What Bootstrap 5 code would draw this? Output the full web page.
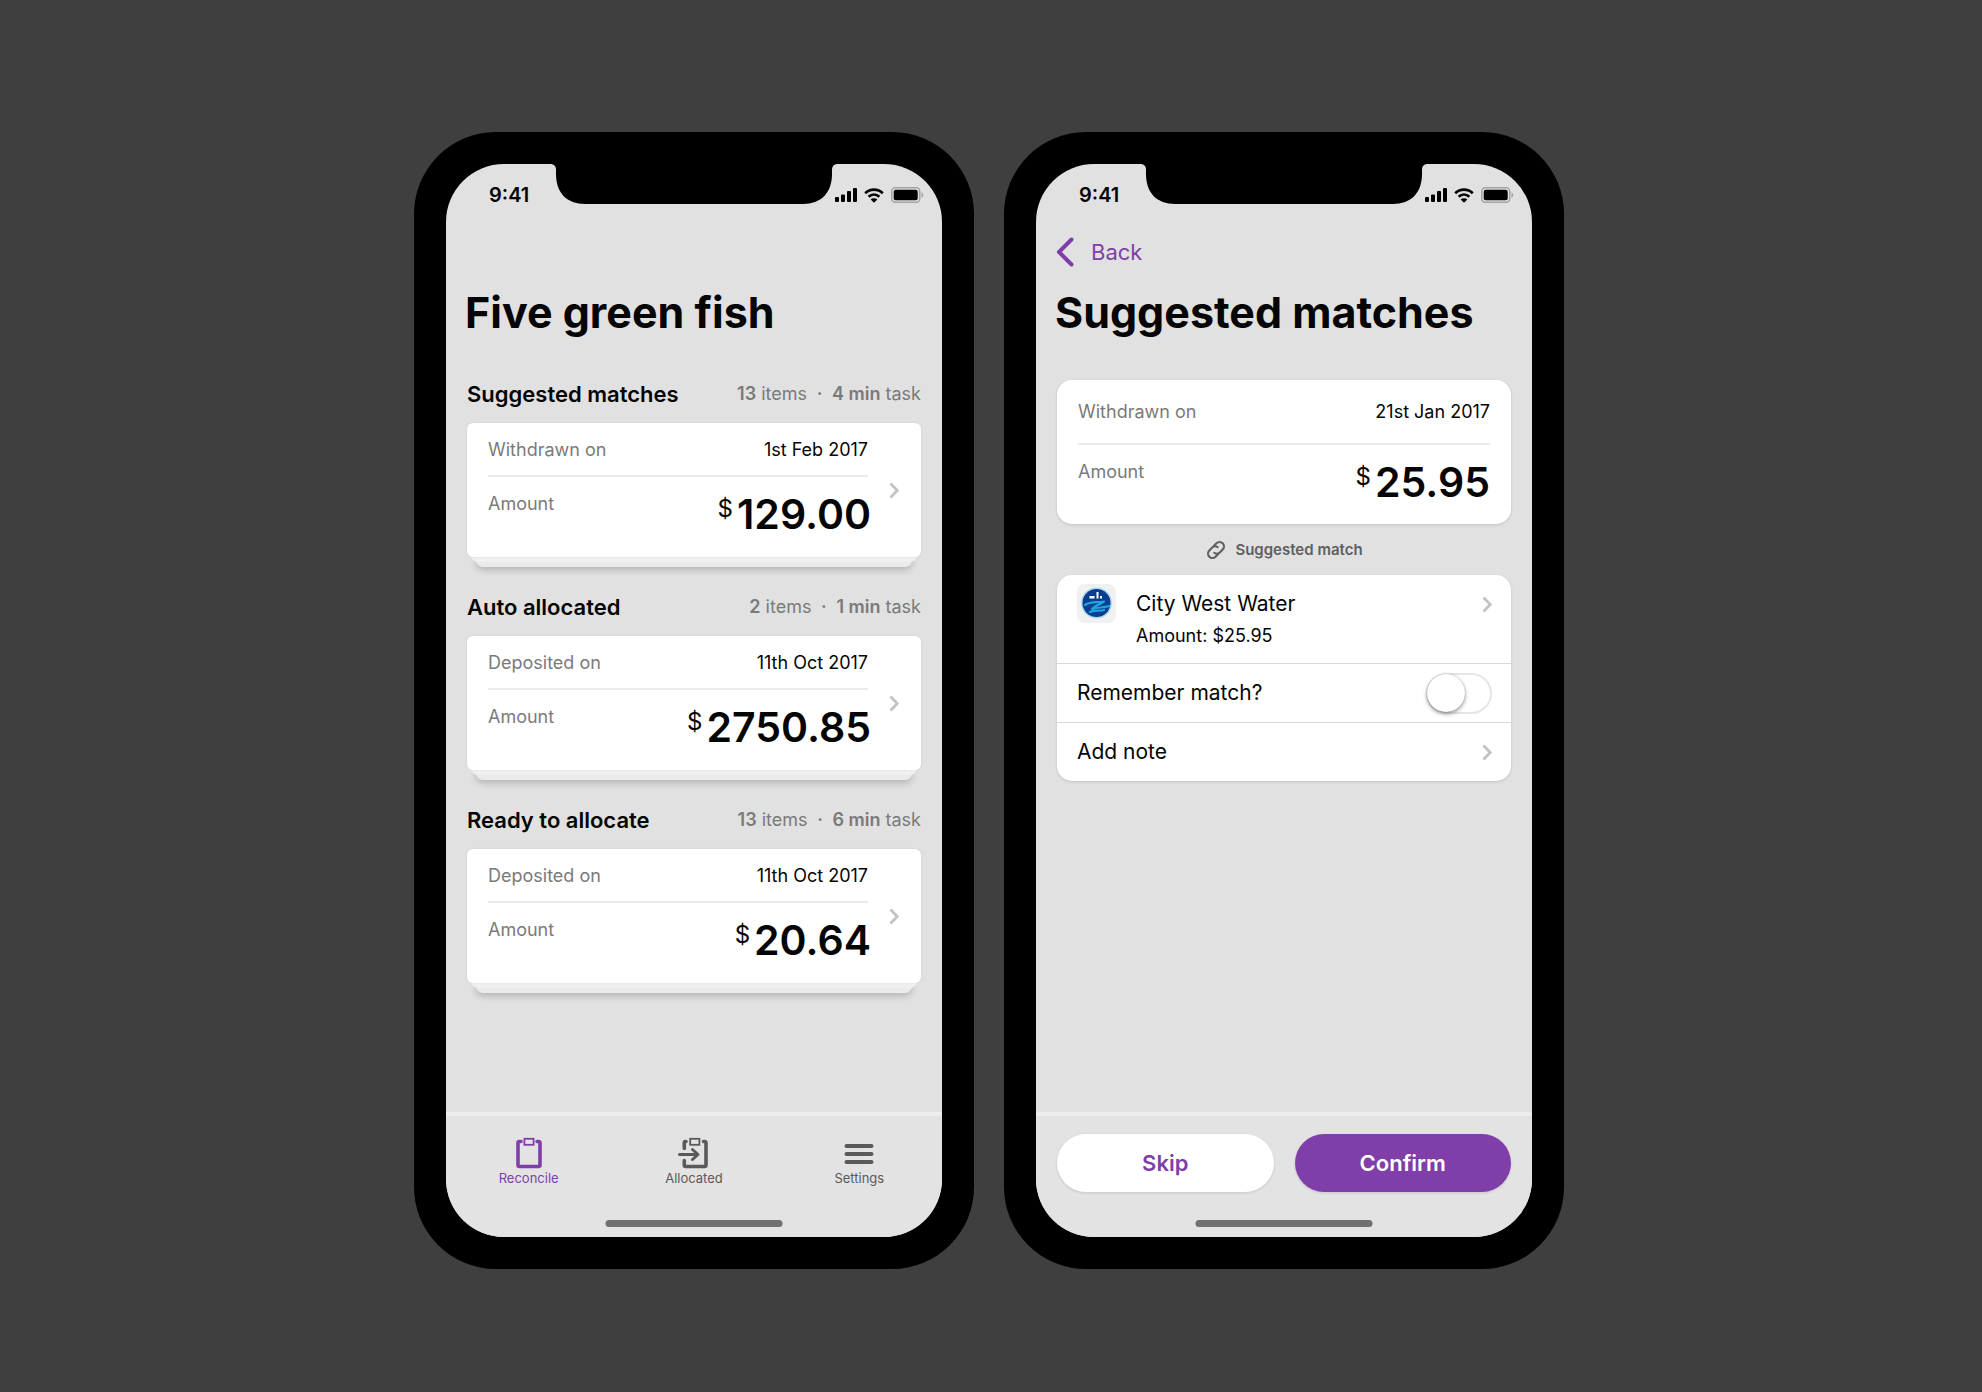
<!DOCTYPE html>
<html lang="en">
<head>
<meta charset="utf-8">
<meta name="viewport" content="width=device-width, initial-scale=1">
<title>Five green fish</title>
<link href="https://cdn.jsdelivr.net/npm/bootstrap@5.3.0/dist/css/bootstrap.min.css" rel="stylesheet">
<style>
  :root { --brand: #803fa8; --screen: #e1e1e1; --ink: #050505; --soft: #7a7a7a; --rule: #ebebeb; }
  body { background: #3f3f3f; color: var(--ink); font-family: Inter, "Liberation Sans", sans-serif; font-size: 18px; line-height: 24px; }
  a { color: inherit; text-decoration: none; }
  svg { display: block; flex: none; }
  .stage { gap: 30px; padding: 132px 4px 0 0; }
  .phone { flex: 1 1 0; min-width: 400px; max-width: 560px; padding: 32px; background: #000; border-radius: 82px; }
  .screen { min-height: 1073px; background: var(--screen); border-radius: 58px; overflow: hidden; }
  .notch { top: 0; left: 50%; transform: translateX(-50%); }
  .statusbar { height: 62px; padding: 0 18px 0 43px; font-size: 20px; }
  .statusbar-icons { gap: 7px; }
  .navrow { height: 52px; padding: 0 20px; font-size: 22px; color: var(--brand); }
  .page-title { font-size: 43px; line-height: 56px; font-weight: 700; padding: 6px 19px 0; margin: 0 0 40px; }
  .section-block { padding: 0 21px; margin-bottom: 26px; }
  .section-head { height: 43px; padding-bottom: 16px; }
  .section-head h2 { font-size: 22px; line-height: 28px; font-weight: 600; margin: 0; }
  .meta { color: var(--soft); }
  .meta b { font-weight: 600; }
  .tile { border: 0; background: #fff; color: var(--ink); box-shadow: 0 1px 3px rgba(0,0,0,.14); }
  .stacked { isolation: isolate; margin-bottom: 10px; }
  .stacked .tile { border-radius: 6px; min-height: 134px; padding: 0 22px 0 21px; gap: 21px; box-shadow: 0 0 3px rgba(0,0,0,.08); }
  .stacked::before, .stacked::after { content: ""; position: absolute; z-index: -1; height: 12px; border-radius: 0 0 7px 7px; }
  .stacked::before { left: 4px; right: 4px; bottom: -5px; background: #f0f0f0; }
  .stacked::after { left: 9px; right: 9px; bottom: -10px; background: #ebebeb; z-index: -2; box-shadow: 0 3px 7px rgba(0,0,0,.2); }
  .stacked .money { margin-right: -3px; }
  .fact { height: 54px; padding-top: 1px; border-bottom: 2px solid var(--rule); }
  .fact-label { color: var(--soft); }
  .total { height: 80px; padding-top: 15px; }
  .money { font-size: 41px; line-height: 48px; font-weight: 600; gap: 4px; margin-top: -2px; }
  .money small { font-size: 24px; line-height: 38px; font-weight: 400; }
  .wide-tile { border-radius: 15px; margin: 0 21px; }
  .detail { padding: 0 21px; }
  .detail .fact { height: 65px; }
  .detail .total { height: 79px; }
  .match-label { height: 51px; gap: 8px; font-size: 15px; font-weight: 600; color: #5f5f5f; }
  .options { overflow: hidden; }
  .option { height: 59px; padding: 0 19px 0 20px; font-size: 21px; border-top: 1px solid #d9d9d9; }
  .merchant { height: 88px; padding: 9px 19px 0 20px; }
  .merchant-name { font-size: 21px; line-height: 40px; }
  .form-switch .toggle { width: 66px; height: 41px; margin: 0; border: 2px solid #e6e6e6; border-radius: 21px; background: #fff; appearance: none; position: relative; }
  .toggle::before { content: ""; position: absolute; left: -1px; top: -1px; width: 38px; height: 38px; border-radius: 50%; background: #fff; box-shadow: 0 2px 4px rgba(0,0,0,.4), 0 0 1px rgba(0,0,0,.3); }
  .form-switch .toggle:checked { background: var(--brand); }
  .toggle:checked::before { left: 25px; }
  .bottombar { height: 125px; background: #e3e3e3; border-top: 4px solid #ededed; }
  .tabs { height: 93px; }
  .tab { padding-top: 21px; font-size: 13px; line-height: 18px; color: #5a5a5a; }
  .tab.active { color: var(--brand); }
  .actions { height: 100px; padding: 18px 21px 0; gap: 21px; }
  .actions .btn { height: 58px; border: 0; border-radius: 29px; font-size: 22px; font-weight: 600; box-shadow: 0 1px 3px rgba(0,0,0,.12); }
  .btn-skip { background: #fff; color: var(--brand); }
  .btn-confirm { background: var(--brand); color: #fff; }
  .home-bar { width: 177px; height: 7px; bottom: 10px; left: 50%; transform: translateX(-50%); background: #707070; border-radius: 4px; }
</style>
<script src="https://cdn.jsdelivr.net/npm/bootstrap@5.3.0/dist/js/bootstrap.bundle.min.js"></script>
</head>
<body>
<svg width="0" height="0" class="position-absolute" aria-hidden="true">
  <symbol id="notch" viewBox="0 0 288 40"><path d="M0 0H288C284 0 282 2 282 6V10C282 29 271 40 253 40H35C17 40 6 29 6 10V6C6 2 4 0 0 0Z"/></symbol>
  <symbol id="signal" viewBox="0 0 22 14"><path d="M0 10a1 1 0 0 1 1-1h2a1 1 0 0 1 1 1v3a1 1 0 0 1-1 1H1a1 1 0 0 1-1-1zM6 7.500a1 1 0 0 1 1-1h2a1 1 0 0 1 1 1V13a1 1 0 0 1-1 1H7a1 1 0 0 1-1-1zM12 4a1 1 0 0 1 1-1h2a1 1 0 0 1 1 1v9a1 1 0 0 1-1 1h-2a1 1 0 0 1-1-1zM18 1a1 1 0 0 1 1-1h2a1 1 0 0 1 1 1v12a1 1 0 0 1-1 1h-2a1 1 0 0 1-1-1z"/></symbol>
  <symbol id="wifi" viewBox="0 0 20 15"><path d="M1.200 5.200C6.200.400 13.800.400 18.800 5.200M4.600 8.800c3.200-2.900 7.600-2.900 10.800 0" fill="none" stroke="currentColor" stroke-width="2.700"/><path d="M10 14.800l-3.400-3.400c1.900-1.500 4.900-1.500 6.800 0z"/></symbol>
  <symbol id="battery" viewBox="0 0 33 16"><rect x=".75" y=".75" width="28" height="14.500" rx="3.500" fill="none" stroke="#a3a3a3" stroke-width="1.500"/><rect x="2.700" y="2.700" width="24" height="10.600" rx="2"/><path d="M30.500 5.200c2.300 1 2.300 4.600 0 5.600z" fill="#a3a3a3"/></symbol>
  <symbol id="chevron" viewBox="0 0 10 17"><path d="M1.500 1.500 8.200 8.500 1.500 15.500" fill="none" stroke="#c3c3c3" stroke-width="2.800"/></symbol>
</svg>

<main class="stage d-flex flex-wrap justify-content-center">
  <section class="phone">
    <div class="screen position-relative d-flex flex-column">
      <svg class="notch position-absolute" width="288" height="40"><use href="#notch"/></svg>
      <header class="statusbar d-flex align-items-center justify-content-between fw-semibold">
        <span>9:41</span>
        <span class="statusbar-icons d-flex align-items-center">
          <svg width="22" height="14"><use href="#signal"/></svg>
          <svg width="20" height="15"><use href="#wifi"/></svg>
          <svg width="33" height="16"><use href="#battery"/></svg>
        </span>
      </header>
      <div class="navrow"></div>
      <h1 class="page-title">Five green fish</h1>

      <div class="section-block">
        <div class="section-head d-flex align-items-center justify-content-between">
          <h2>Suggested matches</h2>
          <span class="meta"><b>13</b> items <b>&nbsp;·&nbsp;</b> <b>4 min</b> task</span>
        </div>
        <div class="stacked position-relative">
          <a href="#" class="tile card flex-row align-items-center">
            <div class="flex-grow-1">
              <div class="fact d-flex align-items-center justify-content-between"><span class="fact-label">Withdrawn on</span><span>1st Feb 2017</span></div>
              <div class="total d-flex justify-content-between"><span class="fact-label">Amount</span><span class="money d-flex"><small>$</small>129.00</span></div>
            </div>
            <svg width="10" height="17"><use href="#chevron"/></svg>
          </a>
        </div>
      </div>

      <div class="section-block">
        <div class="section-head d-flex align-items-center justify-content-between">
          <h2>Auto allocated</h2>
          <span class="meta"><b>2</b> items <b>&nbsp;·&nbsp;</b> <b>1 min</b> task</span>
        </div>
        <div class="stacked position-relative">
          <a href="#" class="tile card flex-row align-items-center">
            <div class="flex-grow-1">
              <div class="fact d-flex align-items-center justify-content-between"><span class="fact-label">Deposited on</span><span>11th Oct 2017</span></div>
              <div class="total d-flex justify-content-between"><span class="fact-label">Amount</span><span class="money d-flex"><small>$</small>2750.85</span></div>
            </div>
            <svg width="10" height="17"><use href="#chevron"/></svg>
          </a>
        </div>
      </div>

      <div class="section-block">
        <div class="section-head d-flex align-items-center justify-content-between">
          <h2>Ready to allocate</h2>
          <span class="meta"><b>13</b> items <b>&nbsp;·&nbsp;</b> <b>6 min</b> task</span>
        </div>
        <div class="stacked position-relative">
          <a href="#" class="tile card flex-row align-items-center">
            <div class="flex-grow-1">
              <div class="fact d-flex align-items-center justify-content-between"><span class="fact-label">Deposited on</span><span>11th Oct 2017</span></div>
              <div class="total d-flex justify-content-between"><span class="fact-label">Amount</span><span class="money d-flex"><small>$</small>20.64</span></div>
            </div>
            <svg width="10" height="17"><use href="#chevron"/></svg>
          </a>
        </div>
      </div>

      <footer class="bottombar mt-auto">
        <nav class="tabs row g-0 text-center" aria-label="Main">
          <a href="#" class="tab active col d-flex flex-column align-items-center" aria-current="page">
            <svg width="30" height="32" viewBox="0 0 30 32"><path d="M7 4.500H5.500Q4 4.500 4 6V28Q4 29.500 5.500 29.500H24.500Q26 29.500 26 28V6Q26 4.500 24.500 4.500H23" fill="none" stroke="currentColor" stroke-width="3.600" stroke-linecap="round"/><rect x="10.400" y="1.800" width="9.200" height="6" fill="none" stroke="currentColor" stroke-width="1.800"/></svg>
            <span>Reconcile</span>
          </a>
          <a href="#" class="tab col d-flex flex-column align-items-center">
            <svg width="32" height="32" viewBox="0 0 32 32"><path d="M8 4.500H7.200Q6.300 4.500 6.300 5.800V11.500M6.300 23.500V28Q6.300 29.500 7.800 29.500H26.500Q28 29.500 28 28V6Q28 4.500 26.500 4.500H25.500" fill="none" stroke="currentColor" stroke-width="3.600" stroke-linecap="round"/><rect x="12.200" y="1.800" width="9.200" height="6" fill="none" stroke="currentColor" stroke-width="1.800"/><path d="M1.500 17.500H19M14.500 12.500 20 17.500 14.500 22.500" fill="none" stroke="currentColor" stroke-width="3" stroke-linecap="round" stroke-linejoin="round"/></svg>
            <span>Allocated</span>
          </a>
          <a href="#" class="tab col d-flex flex-column align-items-center">
            <svg width="30" height="32" viewBox="0 0 30 32"><path d="M2.500 9H27.500M2.500 17H27.500M2.500 25H27.500" fill="none" stroke="currentColor" stroke-width="4" stroke-linecap="round"/></svg>
            <span>Settings</span>
          </a>
        </nav>
      </footer>
      <div class="home-bar position-absolute"></div>
    </div>
  </section>

  <section class="phone">
    <div class="screen position-relative d-flex flex-column">
      <svg class="notch position-absolute" width="288" height="40"><use href="#notch"/></svg>
      <header class="statusbar d-flex align-items-center justify-content-between fw-semibold">
        <span>9:41</span>
        <span class="statusbar-icons d-flex align-items-center">
          <svg width="22" height="14"><use href="#signal"/></svg>
          <svg width="20" height="15"><use href="#wifi"/></svg>
          <svg width="33" height="16"><use href="#battery"/></svg>
        </span>
      </header>
      <div class="navrow d-flex align-items-center">
        <a href="#" class="d-flex align-items-center gap-3">
          <svg width="19" height="30" viewBox="0 0 19 30"><path d="M15.500 2.500 3 15 15.500 27.500" fill="none" stroke="currentColor" stroke-width="4" stroke-linecap="round" stroke-linejoin="round"/></svg>
          <span>Back</span>
        </a>
      </div>
      <h1 class="page-title">Suggested matches</h1>

      <div class="tile wide-tile detail card">
        <div class="fact d-flex align-items-center justify-content-between"><span class="fact-label">Withdrawn on</span><span>21st Jan 2017</span></div>
        <div class="total d-flex justify-content-between"><span class="fact-label">Amount</span><span class="money d-flex"><small>$</small>25.95</span></div>
      </div>

      <div class="match-label d-flex align-items-center justify-content-center">
        <svg width="22" height="22" viewBox="0 0 24 24"><g transform="rotate(-45 12 12)" fill="none" stroke="currentColor" stroke-width="2.300" stroke-linecap="round"><path d="M11 16.800H6.500A4.800 4.800 0 0 1 6.500 7.200H11A4.800 4.800 0 0 1 15.500 11"/><path d="M13 7.200H17.500A4.800 4.800 0 0 1 17.500 16.800H13A4.800 4.800 0 0 1 8.500 13"/></g></svg>
        <span>Suggested match</span>
      </div>

      <div class="tile wide-tile options card">
        <a href="#" class="merchant d-flex">
          <svg width="39" height="39" viewBox="0 0 39 39"><rect width="39" height="39" rx="8" fill="#f1f1f1"/><circle cx="19.500" cy="19" r="15.500" fill="#a9dcf5"/><circle cx="19.500" cy="19" r="14" fill="#0a3f8f"/><path d="M12.500 12h5v2.500h-5zM19.500 8h2v6.500h-2zM23 12h2v2.500h-2z" fill="#fff"/><path d="M8 21C14 17 20 19 27 17.500 23 21 18 21 15 25 21 23 26 24 32 22M13 28C18 25.500 22 27.500 27 26" fill="none" stroke="#1fa5dc" stroke-width="2.200" stroke-linecap="round" stroke-linejoin="round"/></svg>
          <div class="flex-grow-1 ms-3 ps-1">
            <div class="merchant-name d-flex align-items-center justify-content-between"><span>City West Water</span><svg width="10" height="17"><use href="#chevron"/></svg></div>
            <div>Amount: $25.95</div>
          </div>
        </a>
        <div class="option form-switch d-flex align-items-center justify-content-between">
          <label for="remember">Remember match?</label>
          <input class="toggle" type="checkbox" role="switch" id="remember">
        </div>
        <a href="#" class="option d-flex align-items-center justify-content-between">
          <span>Add note</span><svg width="10" height="17"><use href="#chevron"/></svg>
        </a>
      </div>

      <footer class="bottombar mt-auto">
        <div class="actions d-flex">
          <button type="button" class="btn btn-skip flex-fill w-50">Skip</button>
          <button type="button" class="btn btn-confirm flex-fill w-50">Confirm</button>
        </div>
      </footer>
      <div class="home-bar position-absolute"></div>
    </div>
  </section>
</main>
</body>
</html>
